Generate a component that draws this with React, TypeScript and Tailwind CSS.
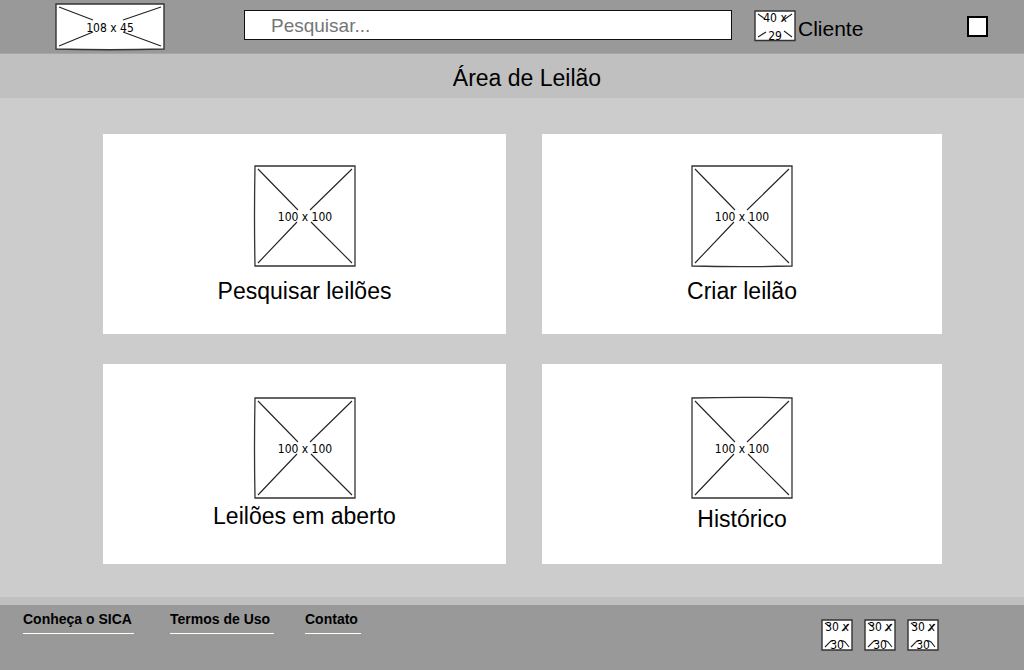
type Bow = "left" | "top" | "bottom" | "none";

const labelFont = "fill-black font-['DejaVu_Sans_Condensed','DejaVu_Sans',sans-serif] text-[12px]";

const outlines: Record<Bow, string> = {
  none: "M1 1H101V101H1Z",
  left: "M1 1H101V101H1Q0 51 1 1Z",
  top: "M1 1Q51 -0.4 101 1V101H1Z",
  bottom: "M1 1H101V101Q51 102.4 1 101Z",
};

function Picture({ bow }: { bow: Bow }) {
  return (
    <svg width="102" height="102" viewBox="0 0 102 102" role="img" aria-label="100 x 100" className="block overflow-visible">
      <path d={outlines[bow]} fill="white" stroke="#333" strokeWidth="1.3" />
      <path d="M4 4L44 45M98 4L56 45M4 98L43 57M98 98L57 57" fill="none" stroke="#222" strokeWidth="1.1" />
      <text x="51" y="56" textAnchor="middle" className={labelFont}>100 x 100</text>
    </svg>
  );
}

function Logo() {
  return (
    <svg width="110" height="48" viewBox="0 0 110 48" role="img" aria-label="108 x 45" className="block">
      <path d="M1 1H109V46Q55 47.6 1 46Z" fill="white" stroke="#333" strokeWidth="1.4" />
      <path d="M4 4L38 17M106 4L68 17M4 43L38 29M106 43L68 29" fill="none" stroke="#222" strokeWidth="1.1" />
      <text x="55" y="29" textAnchor="middle" className={labelFont}>108 x 45</text>
    </svg>
  );
}

function Avatar() {
  return (
    <svg width="42" height="32" viewBox="0 0 42 32" role="img" aria-label="40 x 29" className="block">
      <path d="M1 1H41V30.5H1Z" fill="white" stroke="#333" strokeWidth="1.4" />
      <path d="M4 4L11 9M38 4L28 11M4 27L12 22M38 27L30 21" fill="none" stroke="#222" strokeWidth="1.1" />
      <text x="21" y="12" textAnchor="middle" className={labelFont}>40 x</text>
      <text x="21" y="30" textAnchor="middle" className={labelFont}>29</text>
    </svg>
  );
}

function SocialIcon() {
  return (
    <svg width="32" height="32" viewBox="0 0 32 32" role="img" aria-label="30 x 30" className="block">
      <path d="M1 1H31V31H1Z" fill="white" stroke="#333" strokeWidth="1.4" />
      <path d="M4 4L9 8M28 5L21 12M4 28L9 23Q10 21.5 12 22M28 28L24 23Q22 21.5 20 22" fill="none" stroke="#222" strokeWidth="1.1" />
      <text x="16" y="12" textAnchor="middle" className={labelFont}>30 x</text>
      <text x="16" y="30" textAnchor="middle" className={labelFont}>30</text>
    </svg>
  );
}

const cards: { label: string; bow: Bow; style: string }[] = [
  { label: "Pesquisar leilões", bow: "left", style: "gap-[10px] pt-[31px]" },
  { label: "Criar leilão", bow: "bottom", style: "gap-[10px] pt-[31px]" },
  { label: "Leilões em aberto", bow: "left", style: "gap-[3px] pt-[33px]" },
  { label: "Histórico", bow: "top", style: "gap-[6px] pt-[33px]" },
];

const links = [
  { label: "Conheça o SICA", style: "mr-9 w-[111px]" },
  { label: "Termos de Uso", style: "mr-[31px] w-[104px]" },
  { label: "Contato", style: "w-14" },
];

export default function App() {
  return (
    <div className="flex min-h-screen flex-col bg-[#ccc] font-['Liberation_Sans',Arial,sans-serif] text-black">
      <header className="flex items-start border-b border-[#a6a6a6] bg-[#999] pr-9 pb-[2px] pl-[55px]">
        <a href="#inicio" className="mr-[79px] pt-[3px]">
          <Logo />
        </a>
        <input
          type="search"
          aria-label="Pesquisar"
          placeholder="Pesquisar..."
          className="mt-[10px] h-[30px] min-w-0 flex-1 border border-[#111] bg-white px-[26px] pt-[2px] text-[19px] placeholder:text-[#757575]"
        />
        <div className="ml-[22px] flex w-[213px] gap-[2px] pt-[10px]">
          <Avatar />
          <span className="pt-[7px] text-[21px] leading-6">Cliente</span>
        </div>
        <button type="button" aria-label="Menu" className="mt-4 h-[21px] w-[21px] border-2 border-black bg-white" />
      </header>

      <div className="bg-[#c0c0c0] pt-[10px] pb-[6px] pl-[30px]">
        <h1 className="text-center text-[23px] leading-7">Área de Leilão</h1>
      </div>

      <main className="grid flex-1 grid-cols-[403fr_400fr] content-start gap-x-9 gap-y-[30px] pt-9 pr-[82px] pb-[33px] pl-[103px]">
        {cards.map((card) => (
          <a key={card.label} href="#leilao" className={`flex min-h-[200px] flex-col items-center bg-white ${card.style}`}>
            <Picture bow={card.bow} />
            <span className="text-[23px] leading-7">{card.label}</span>
          </a>
        ))}
      </main>

      <footer className="flex items-start justify-between border-t-8 border-[#c0c0c0] bg-[#999] pr-[85px] pb-[19px] pl-[23px]">
        <nav className="flex pt-1 text-[14px] leading-5 font-bold">
          {links.map((link) => (
            <a key={link.label} href="#rodape" className={`border-b border-[#fffff0] pb-1 whitespace-nowrap ${link.style}`}>
              {link.label}
            </a>
          ))}
        </nav>
        <div className="flex gap-[11px] pt-[14px]">
          <SocialIcon />
          <SocialIcon />
          <SocialIcon />
        </div>
      </footer>
    </div>
  );
}
